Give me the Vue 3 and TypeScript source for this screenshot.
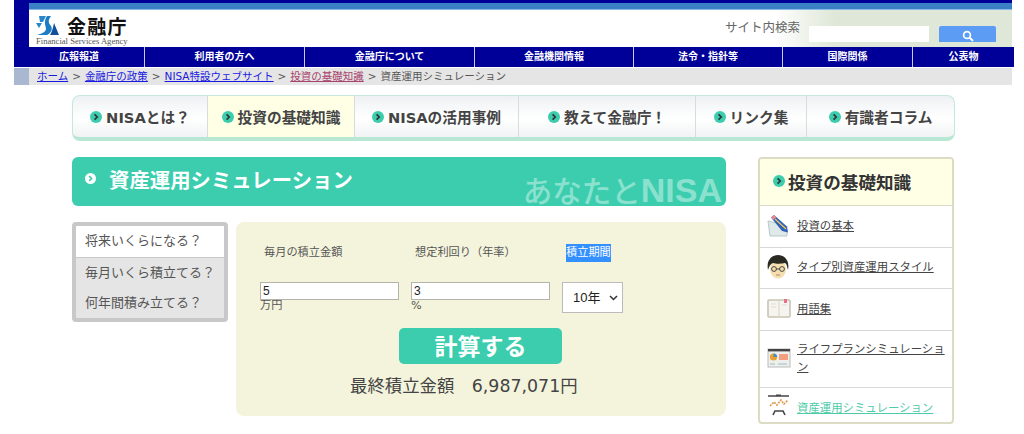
<script setup lang="ts">
import { ref } from 'vue'

const navItems = [
  { label: '広報報道', width: 131 },
  { label: '利用者の方へ', width: 160 },
  { label: '金融庁について', width: 170 },
  { label: '金融機関情報', width: 159 },
  { label: '法令・指針等', width: 149 },
  { label: '国際関係', width: 130 },
  { label: '公表物', width: 101 },
]

const tabs = [
  { label: 'NISAとは？', width: 135 },
  { label: '投資の基礎知識', width: 147, active: true },
  { label: 'NISAの活用事例', width: 164 },
  { label: '教えて金融庁！', width: 177 },
  { label: 'リンク集', width: 111 },
  { label: '有識者コラム', width: 147 },
]

const questions = ['将来いくらになる？', '毎月いくら積立てる？', '何年間積み立てる？']

const sideLinks = [
  { label: '投資の基本', icon: 'pencil', height: 42 },
  { label: 'タイプ別資産運用スタイル', icon: 'face', height: 41 },
  { label: '用語集', icon: 'book', height: 42 },
  { label: 'ライフプランシミュレーション', icon: 'plan', height: 57 },
  { label: '資産運用シミュレーション', icon: 'chart', height: 34, current: true },
]

const monthly = ref('5')
const rate = ref('3')
const years = ref('10')
</script>

<template>
  <div class="site">
    <header class="head">
      <div class="head-top"></div>
      <div class="head-main">
        <div class="logo">
          <div class="logo-row">
            <svg class="logo-mark" width="24" height="21" viewBox="0 0 24 21">
              <path d="M3 1h7L7 7H4z" fill="#2a86c8" />
              <path d="M0 8h6L3 13z" fill="#2a86c8" />
              <path d="M11 1h4c-3 4-3 7 0 10 2 3 0 7-4 9H1c4-1 9-3 9-6 0-3-3-7 1-13z" fill="#1a7cc4" />
              <path d="M18 8l5 12h-9c2-3 3-7 4-12z" fill="#12509c" />
            </svg>
            <span class="logo-name">金融庁</span>
          </div>
          <div class="logo-en">Financial Services Agency</div>
        </div>
        <div class="search">
          <span class="search-label">サイト内検索</span>
          <input class="search-input" type="text" />
          <button class="search-btn" type="button" aria-label="検索">
            <svg width="12" height="12" viewBox="0 0 12 12">
              <circle cx="5" cy="5" r="3.4" fill="none" stroke="#fff" stroke-width="1.7" />
              <path d="M7.5 7.5L11 11" stroke="#fff" stroke-width="1.9" />
            </svg>
          </button>
        </div>
      </div>
    </header>

    <nav class="gnav">
      <a v-for="item in navItems" :key="item.label" class="gnav-item" :style="{ width: item.width + 'px' }">{{ item.label }}</a>
    </nav>

    <div class="crumbs">
      <a class="link">ホーム</a> &gt;
      <a class="link">金融庁の政策</a> &gt;
      <a class="link">NISA特設ウェブサイト</a> &gt;
      <a class="link visited">投資の基礎知識</a> &gt;
      資産運用シミュレーション
    </div>
  </div>

  <div class="wrap">
    <ul class="tabs">
      <li
        v-for="tab in tabs"
        :key="tab.label"
        class="tab"
        :class="{ active: tab.active }"
        :style="{ width: tab.width + 'px' }"
      >
        <svg class="bullet" width="12" height="12" viewBox="0 0 12 12">
          <circle cx="6" cy="6" r="6" fill="#3bcdae" />
          <path d="M4.6 3.4L7.2 6 4.6 8.6" fill="none" stroke="#333" stroke-width="1.7" />
        </svg>
        {{ tab.label }}
      </li>
    </ul>

    <div class="columns">
      <main class="content">
        <h1 class="title">
          <svg width="11" height="11" viewBox="0 0 12 12">
            <circle cx="6" cy="6" r="6" fill="#fff" />
            <path d="M4.6 3.4L7.2 6 4.6 8.6" fill="none" stroke="#3bcdae" stroke-width="1.7" />
          </svg>
          <span>資産運用シミュレーション</span>
          <span class="watermark">あなたと<b>NISA</b></span>
        </h1>

        <div class="sim">
          <ul class="questions">
            <li v-for="(q, i) in questions" :key="q" class="question" :class="{ on: i === 0 }">{{ q }}</li>
          </ul>

          <form class="panel" @submit.prevent>
            <div class="fields">
              <label class="field-label">毎月の積立金額</label>
              <label class="field-label">想定利回り（年率）</label>
              <label class="field-label"><span class="selected">積立期間</span></label>
              <div class="field">
                <input v-model="monthly" class="num" type="text" />
                <div class="unit">万円</div>
              </div>
              <div class="field">
                <input v-model="rate" class="num" type="text" />
                <div class="unit">%</div>
              </div>
              <div class="field">
                <select v-model="years" class="years">
                  <option value="10">10年</option>
                  <option value="20">20年</option>
                  <option value="30">30年</option>
                </select>
              </div>
            </div>
            <button class="calc" type="button">計算する</button>
            <p class="result">最終積立金額　6,987,071円</p>
          </form>
        </div>
      </main>

      <aside class="side">
        <h2 class="side-title">
          <svg width="12" height="12" viewBox="0 0 12 12">
            <circle cx="6" cy="6" r="6" fill="#3bcdae" />
            <path d="M4.6 3.4L7.2 6 4.6 8.6" fill="none" stroke="#333" stroke-width="1.7" />
          </svg>
          投資の基礎知識
        </h2>
        <ul class="side-list">
          <li v-for="link in sideLinks" :key="link.label" class="side-item" :style="{ height: link.height + 'px' }">
            <svg class="side-icon" width="24" height="24" viewBox="0 0 24 24">
              <template v-if="link.icon === 'pencil'">
                <path d="M1 7l12 3 7 7v5H3z" fill="#dfe9ea" stroke="#b8c8c8" />
                <path d="M4 3.5L7 1l13 11.5 1 6-6-1.5z" fill="#2f62b8" />
                <path d="M4 3.5L7 1l2.5 2.2-3 2.6z" fill="#e88a92" />
                <path d="M8 5l11 10" stroke="#f2c85a" stroke-width="1.2" />
              </template>
              <template v-else-if="link.icon === 'face'">
                <ellipse cx="11" cy="14" rx="8" ry="9.5" fill="#f5dfae" />
                <path d="M1 15C-1 5 5 0 11 0s12 5 10 15c-1-3-1-6-3-7-4 1-9 1-12 0-3 1-4 4-5 7z" fill="#2a2a22" />
                <circle cx="7" cy="14" r="2.4" fill="none" stroke="#444" />
                <circle cx="15" cy="14" r="2.4" fill="none" stroke="#444" />
                <path d="M9 14h4" stroke="#444" />
                <path d="M9 20h4" stroke="#a87" />
              </template>
              <template v-else-if="link.icon === 'book'">
                <rect x="1" y="3" width="22" height="17" rx="1" fill="#f6f4ee" stroke="#c8c4b4" stroke-width="1.6" />
                <path d="M12 3v17" stroke="#d8d4c8" />
                <path d="M4 7h5M4 10h5M15 8h5" stroke="#ddd" />
                <rect x="17" y="2" width="3" height="4" fill="#e8708a" />
              </template>
              <template v-else-if="link.icon === 'plan'">
                <rect x="1" y="3" width="22" height="18" fill="#eef0ee" stroke="#bbb" />
                <rect x="1" y="3" width="22" height="2.4" fill="#444" />
                <circle cx="6.5" cy="11" r="3.6" fill="#f0a030" />
                <path d="M6.5 11V7.4a3.6 3.6 0 0 1 3.6 3.6z" fill="#3b8fd0" />
                <rect x="12" y="8" width="9" height="6" fill="#f4a080" />
                <path d="M3 18h5M11 18h9" stroke="#bcc" stroke-width="1.4" />
              </template>
              <template v-else>
                <path d="M1 4h21" stroke="#444" stroke-width="1.6" />
                <path d="M9 2.5h5V4H9z" fill="#444" />
                <path d="M3 14l4-4 3 3 4-5 3 4 4-4" fill="none" stroke="#d89848" stroke-width="1.6" stroke-dasharray="2 1" />
                <path d="M6 23l2-4h8l2 4" fill="none" stroke="#444" stroke-width="1.6" />
              </template>
            </svg>
            <a class="side-link" :class="{ current: link.current }">{{ link.label }}</a>
          </li>
        </ul>
      </aside>
    </div>
  </div>
</template>

<style scoped>
.site,
.wrap {
  font-family: "DejaVu Sans", "Noto Sans CJK JP", sans-serif;
  color: #444;
}

.site {
  margin-left: 14px;
  width: 1000px;
}

.head {
  width: 998px;
  border-left: 15px solid #000099;
  box-sizing: border-box;
}

.head-top {
  height: 6px;
  border-top: 3px solid #000099;
  border-bottom: 1px solid #8ab8e8;
  background: #3a80c4;
}

.head-main {
  height: 37px;
  display: flex;
  justify-content: space-between;
  background: linear-gradient(to right, #fff 0, #fff 745px, #dfe8d8 805px, #dfe8d8 100%);
}

.logo {
  padding: 3px 0 0 7px;
  background: #fff;
}

.logo-row {
  display: flex;
  align-items: center;
  gap: 7px;
  height: 24px;
}

.logo-name {
  font-size: 19px;
  font-weight: 700;
  letter-spacing: 1.3px;
  color: #111;
}

.logo-en {
  font-family: "Liberation Serif", serif;
  font-size: 8.6px;
  line-height: 9px;
  color: #555;
  white-space: nowrap;
}

.search {
  display: flex;
  align-items: flex-start;
  padding-right: 16px;
}

.search-label {
  font-size: 12.5px;
  line-height: 16px;
  margin-top: 10px;
  color: #666;
}

.search-input {
  width: 120px;
  height: 16px;
  margin: 16px 10px 0 9px;
  padding: 0;
  border: 0;
  background: #fff;
}

.search-btn {
  width: 57px;
  height: 16px;
  margin-top: 16px;
  padding: 4px 0 0;
  border: 0;
  border-radius: 2px 2px 0 0;
  background: #5c9cf5;
  overflow: hidden;
}

.gnav {
  display: flex;
  height: 20px;
  background: #000099;
  width: 1000px;
}

.gnav-item {
  box-sizing: border-box;
  border-right: 1px solid #c8c8e8;
  font-size: 10px;
  font-weight: 700;
  line-height: 19px;
  text-align: center;
  color: #fff;
}

.gnav-item:last-child {
  border-right: 0;
}

.crumbs {
  width: 998px;
  height: 17px;
  margin-top: 1px;
  box-sizing: border-box;
  border-left: 15px solid #a9b8d0;
  padding-left: 8px;
  background: #e5e5e5;
  font-size: 10.5px;
  word-spacing: 0.6px;
  line-height: 16px;
  color: #555;
  white-space: nowrap;
}

.link {
  color: #1a1ae0;
  text-decoration: underline;
}

.link.visited {
  color: #a8446c;
}

.wrap {
  width: 884px;
  margin: 10px 0 0 72px;
}

.tabs {
  display: flex;
  height: 46px;
  width: 883px;
  margin: 0;
  padding: 0;
  list-style: none;
  box-sizing: border-box;
  border: 1px solid #c5e8dc;
  border-bottom: 4px solid #b8e8d4;
  border-radius: 8px;
  background: linear-gradient(#eef1f3, #fff 55%, #f1f3f4);
  overflow: hidden;
}

.tab {
  display: flex;
  align-items: center;
  justify-content: center;
  gap: 4px;
  flex: none;
  box-sizing: border-box;
  border-right: 1px solid #d8dcdc;
  font-size: 14.7px;
  font-weight: 700;
  color: #444;
  white-space: nowrap;
}

.tab:last-child {
  border-right: 0;
}

.tab.active {
  background: #ffffe6;
}

.bullet {
  flex: none;
}

.columns {
  display: flex;
  align-items: flex-start;
  gap: 32px;
  margin-top: 16px;
}

.content {
  width: 654px;
}

.title {
  position: relative;
  display: flex;
  align-items: center;
  gap: 13px;
  height: 49px;
  margin: 0;
  padding: 0 0 6px 13px;
  box-sizing: border-box;
  overflow: hidden;
  border-radius: 6px;
  background: #3bcdae;
  font-size: 20.4px;
  font-weight: 700;
  color: #fff;
}

.watermark {
  position: absolute;
  right: 4px;
  bottom: -1px;
  font-family: "Liberation Sans", "Noto Sans CJK JP", sans-serif;
  font-size: 29.5px;
  font-weight: 500;
  line-height: 30px;
  color: rgba(255, 255, 255, 0.42);
  white-space: nowrap;
}

.watermark b {
  font-size: 34px;
  font-weight: 700;
}

.sim {
  display: flex;
  align-items: flex-start;
  gap: 8px;
  margin-top: 16px;
}

.questions {
  width: 156px;
  margin: 0;
  padding: 0;
  list-style: none;
  box-sizing: border-box;
  border: 4px solid #c8c8c8;
  border-radius: 4px;
  background: #e5e5e5;
}

.question {
  height: 30px;
  padding-left: 9px;
  font-size: 13px;
  line-height: 30px;
  color: #555;
}

.question.on {
  height: 31px;
  border-bottom: 1px solid #c8c8c8;
  line-height: 29px;
  background: #fff;
}

.panel {
  width: 490px;
  height: 194px;
  box-sizing: border-box;
  padding: 22px 0 0 24px;
  border-radius: 8px;
  background: #f4f4dc;
  font-size: 11.2px;
}

.fields {
  display: grid;
  grid-template-columns: 151px 151px 61px;
  grid-template-rows: 38px 46px;
}

.field-label {
  padding-left: 4px;
  line-height: 18px;
  color: #555;
}

.selected {
  background: #3390ff;
  color: #fff;
  display: inline-block;
}

.num {
  display: block;
  width: 139px;
  height: 18px;
  box-sizing: border-box;
  padding: 0 2px;
  border: 1px solid #b4b4ac;
  background: #fff;
  font-family: "Liberation Sans", sans-serif;
  font-size: 12px;
  color: #222;
}

.unit {
  font-size: 11.2px;
  line-height: 12px;
  color: #555;
}

.years {
  appearance: none;
  width: 61px;
  height: 31px;
  padding-left: 10px;
  border: 1px solid #bbb;
  border-radius: 0;
  background: #fff url("data:image/svg+xml,%3Csvg xmlns='http://www.w3.org/2000/svg' width='9' height='6'%3E%3Cpath d='M1 1l3.5 3.5L8 1' fill='none' stroke='%23333' stroke-width='1.5'/%3E%3C/svg%3E") no-repeat right 4px center;
  font-family: "Liberation Sans", "Noto Sans CJK JP", sans-serif;
  font-size: 13px;
  color: #222;
}

.calc {
  display: block;
  width: 163px;
  height: 36px;
  margin: 0 0 0 139px;
  padding: 0 0 3px;
  border: 0;
  border-radius: 5px;
  background: #3bcdae;
  font-family: "Liberation Sans", "Noto Sans CJK JP", sans-serif;
  font-size: 23px;
  font-weight: 700;
  color: #fff;
}

.result {
  margin: 9px 0 0 90px;
  font-size: 17.4px;
  line-height: 26px;
  color: #444;
  white-space: nowrap;
}

.side {
  width: 196px;
  box-sizing: border-box;
  border: 2px solid #dcdcc4;
  border-radius: 4px;
  overflow: hidden;
}

.side-title {
  display: flex;
  align-items: center;
  gap: 3px;
  height: 47px;
  margin: 0;
  padding: 0 0 2px 13px;
  box-sizing: border-box;
  border-bottom: 1px solid #dcdcc4;
  background: #ffffe6;
  font-size: 17.6px;
  font-weight: 700;
  color: #333;
}

.side-list {
  margin: 0;
  padding: 0;
  list-style: none;
}

.side-item {
  display: flex;
  align-items: center;
  gap: 6px;
  padding: 0 6px 2px 7px;
  box-sizing: border-box;
  border-bottom: 1px solid #d8d8d8;
}

.side-item:last-child {
  border-bottom: 0;
}

.side-icon {
  flex: none;
}

.side-link {
  font-size: 11.4px;
  line-height: 18px;
  color: #444;
  text-decoration: underline;
}

.side-link.current {
  margin-top: 8px;
  color: #4fcba8;
}
</style>
